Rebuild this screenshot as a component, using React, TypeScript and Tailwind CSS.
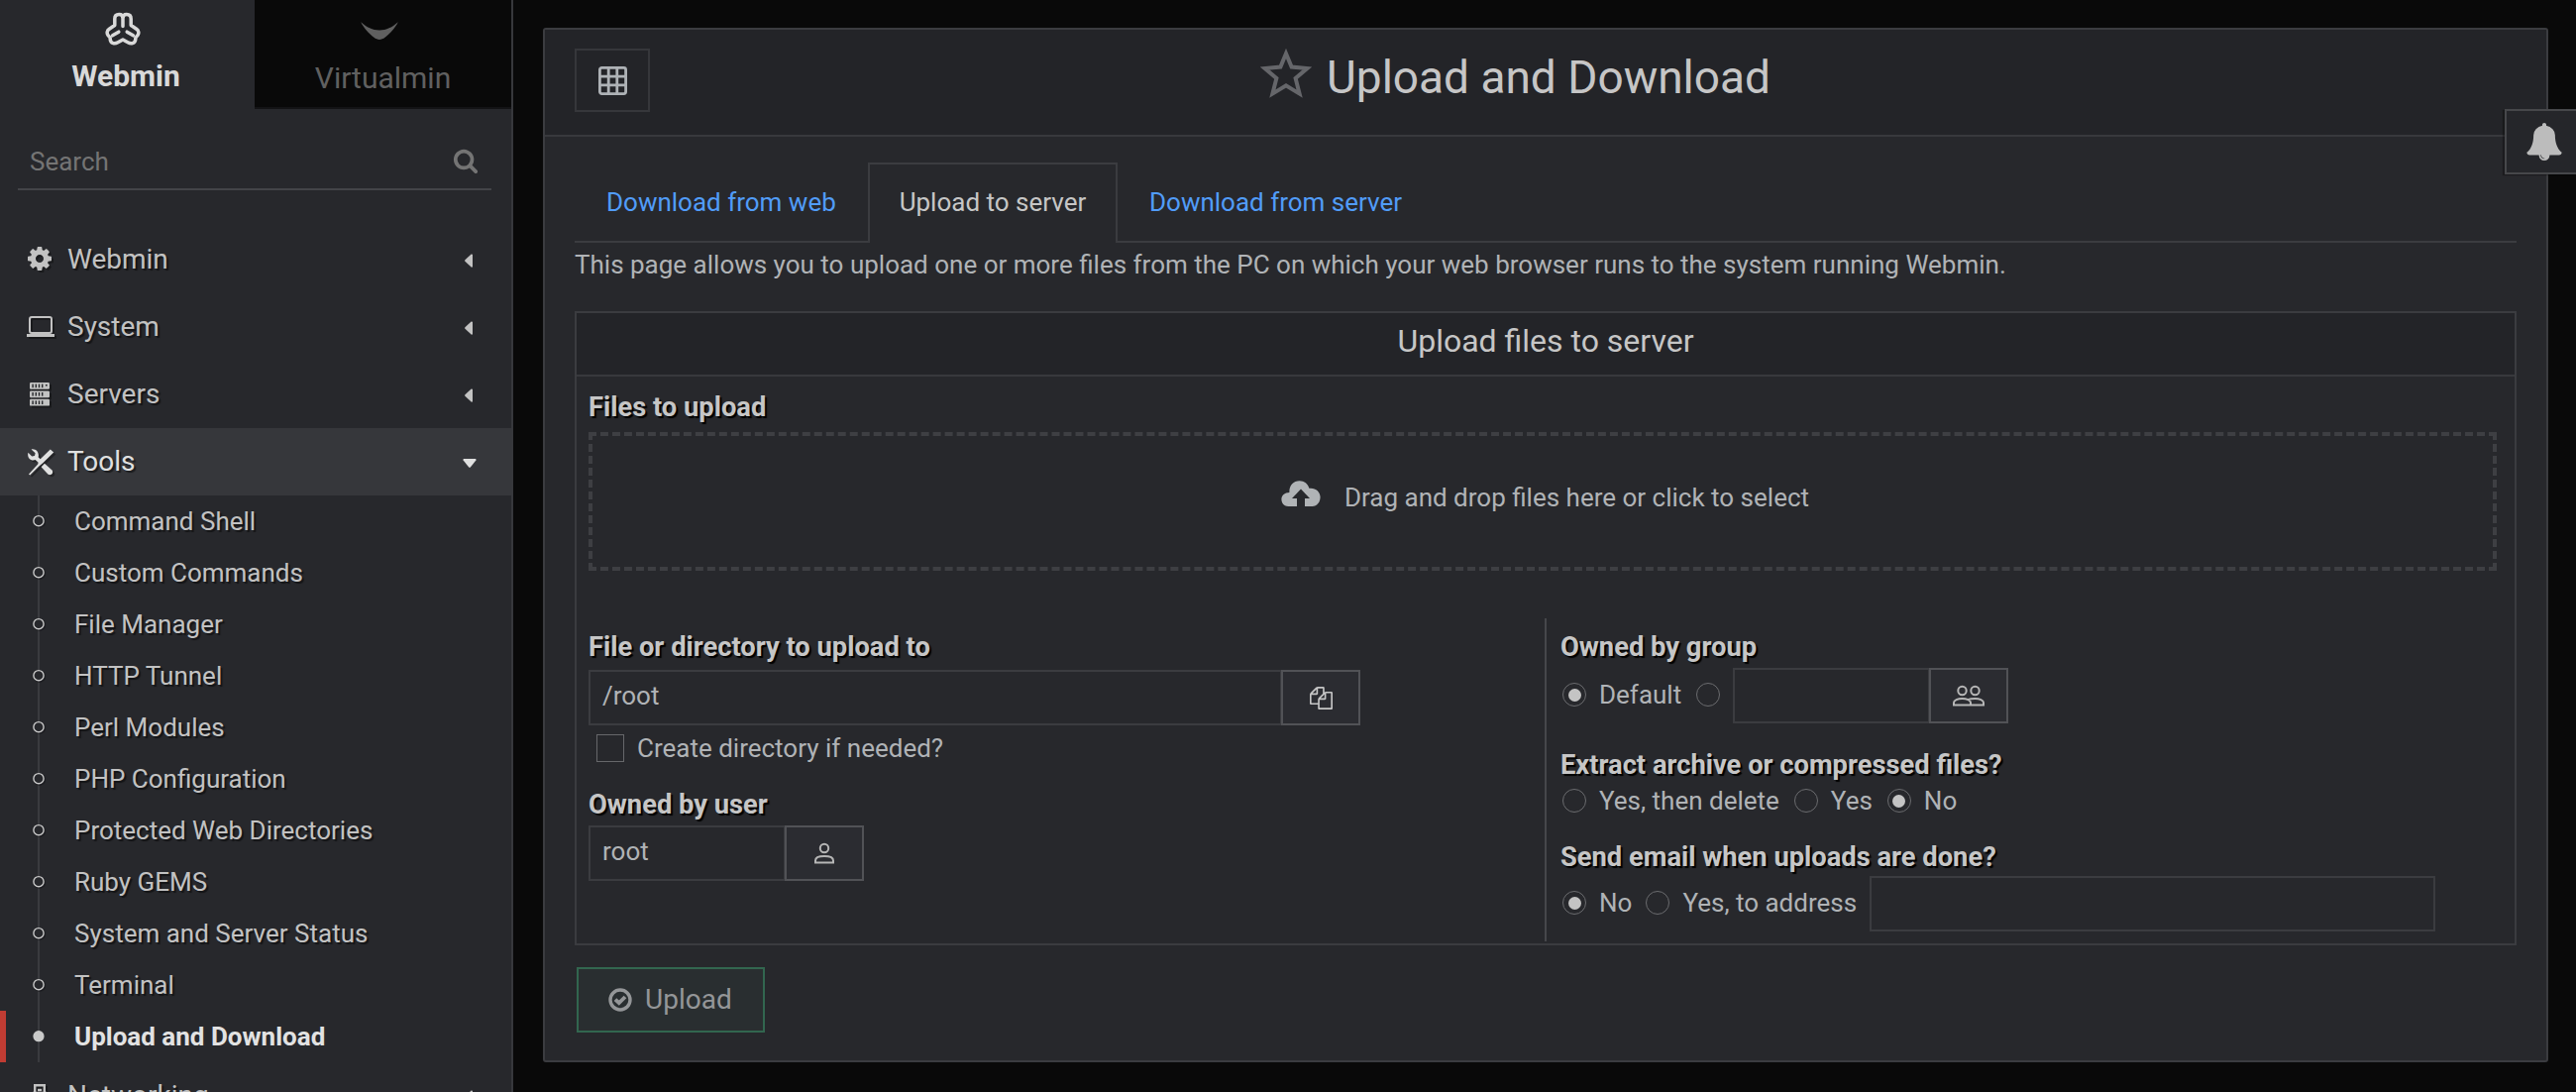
import React from "react";

const PATHS = {
  cog: "M1152 896q0-106-75-181t-181-75-181 75-75 181 75 181 181 75 181-75 75-181zm512-109v222q0 12-8 23t-20 13l-185 28q-19 54-39 91 35 50 107 138 10 12 10 25t-9 23q-27 37-99 108t-94 71q-12 0-26-9l-138-108q-44 23-91 38-16 136-29 186-7 28-36 28h-222q-14 0-24.5-8.5t-11.5-21.5l-28-184q-49-16-90-37l-141 107q-10 9-25 9-14 0-25-11-126-114-165-168-7-10-7-23 0-12 8-23 15-21 51-66.5t54-70.5q-27-50-41-99l-183-27q-13-2-21-12.5t-8-23.5v-222q0-12 8-23t19-13l186-28q14-46 39-92-40-57-107-138-10-12-10-24 0-10 9-23 26-36 98.5-107.5t94.5-71.5q13 0 26 10l138 107q44-23 91-38 16-136 29-186 7-28 36-28h222q14 0 24.5 8.5t11.5 21.5l28 184q49 16 90 37l142-107q9-9 24-9 13 0 25 10 129 119 165 170 7 8 7 22 0 12-8 23-15 21-51 66.5t-54 70.5q26 50 41 98l183 28q13 2 21 12.5t8 23.5z",
  search:
    "M1216 832q0-185-131.5-316.5t-316.5-131.5-316.5 131.5-131.5 316.5 131.5 316.5 316.5 131.5 316.5-131.5 131.5-316.5zm512 832q0 52-38 90t-90 38q-54 0-90-38l-343-342q-179 124-399 124-143 0-273.5-55.5t-225-150-150-225-55.5-273.5 55.5-273.5 150-225 225-150 273.5-55.5 273.5 55.5 225 150 150 225 55.5 273.5q0 220-124 399l343 343q37 37 37 90z",
  bell: "M912 1696q0-16-16-16-59 0-101.5-42.5t-42.5-101.5q0-16-16-16t-16 16q0 73 51.5 124.5t124.5 51.5q16 0 16-16zm816-288q0 52-38 90t-90 38h-448q0 106-75 181t-181 75-181-75-75-181h-448q-52 0-90-38t-38-90q50-42 91-88t85-119.5 74.5-158.5 50-206 19.5-260q0-152 117-282.5t307-158.5q-8-19-8-39 0-40 28-68t68-28 68 28 28 68q0 20-8 39 190 28 307 158.5t117 282.5q0 139 19.5 260t50 206 74.5 158.5 85 119.5 91 88z",
  files:
    "M1696 384q40 0 68 28t28 68v1216q0 40-28 68t-68 28h-960q-40 0-68-28t-28-68v-288h-544q-40 0-68-28t-28-68v-672q0-40 20-88t48-76l408-408q28-28 76-48t88-20h416q40 0 68 28t28 68v328q68-40 128-40h416zm-544 213l-299 299h299v-299zm-640-384l-299 299h299v-299zm196 647l316-316v-416h-384v416q0 40-28 68t-68 28h-416v640h512v-256q0-40 20-88t48-76zm956 804v-1152h-384v416q0 40-28 68t-68 28h-416v640h896z",
};

function Glyph({ d, className }: { d: string; className: string }) {
  return (
    <svg viewBox="0 0 1792 1792" className={className} fill="currentColor">
      <path d={d} />
    </svg>
  );
}

function WebminLogo() {
  return (
    <svg viewBox="0 0 36 34" className="h-[34px] w-9" fill="none" stroke="currentColor" strokeWidth="3.5" strokeLinecap="round" strokeLinejoin="round">
      <path d="M18 14.5V6.5C18 3.8 16.6 2.6 14.2 2.6C11.4 2.6 9.8 4.4 9.8 7V13.5L4.3 17.2C1.9 18.8 1.6 21.6 3 23.6C4 25 4.9 25.2 5.2 26.2C5 29 6 31 8.2 31.6C10.2 32.2 11.6 31.6 13 30.8L18 28L23 30.8C24.4 31.6 25.8 32.2 27.8 31.6C30 31 31 29 30.8 26.2C31.1 25.2 32 25 33 23.6C34.4 21.6 34.1 18.8 31.7 17.2L26.2 13.5V7C26.2 4.4 24.6 2.6 21.8 2.6C19.4 2.6 18 3.8 18 6.5" />
      <path d="M13.8 20.2L7.6 23.8M22.2 20.2L28.4 23.8" />
    </svg>
  );
}

function LaptopIcon() {
  return (
    <svg viewBox="0 0 28 22" className="h-[22px] w-7">
      <rect x="3" y="1" width="22" height="16" rx="2" fill="none" stroke="currentColor" strokeWidth="2" />
      <rect x="0" y="18" width="28" height="3" fill="currentColor" />
    </svg>
  );
}

function ServersIcon() {
  return (
    <svg viewBox="0 0 20 24" className="h-6 w-5">
      {[0, 8.4, 16.8].map((y) => (
        <g key={y}>
          <rect x="0" y={y} width="20" height="6.8" rx="1.2" fill="currentColor" />
          {[2.4, 5.6, 8.8, 12].map((x) => (
            <rect key={x} x={x} y={y + 1.6} width="1.4" height="3.6" fill="#27282c" />
          ))}
        </g>
      ))}
      <rect x="16" y="2" width="1.6" height="1.6" fill="#27282c" />
    </svg>
  );
}

function ToolsIcon() {
  return (
    <svg viewBox="0 0 27 27" className="h-[27px] w-[27px]" fill="currentColor">
      <path d="M3.6 0.4L7.6 4.2L7 7L4.2 7.4L0.4 3.8C-.6 7.6 1.6 11.4 5.4 11.4C6.4 11.4 7.2 11.2 7.6 11L11 14L13.8 11.4L10.6 8.2C12 4.2 8.6-0.6 3.6 0.4Z" />
      <path d="M22.8 0.4L26.2 3.6L15 14.6L11.6 17.2L2.2 26.6L1 25.4L10.2 15.6L11.2 11.8Z" />
      <path d="M17 14.8L24.6 21.6C26.4 24 23.2 27.6 20.6 25.8L13.6 18.2Z" />
    </svg>
  );
}

function NetworkIcon() {
  return (
    <svg viewBox="0 0 14 24" className="h-6 w-[14px]" fill="none" stroke="currentColor" strokeWidth="2.4">
      <path d="M2.2 9V1.2H11.8V9M1.2 9H12.8V17H1.2ZM7 17V24" />
      <path d="M5 6H9" />
    </svg>
  );
}

function CloudUpload() {
  return (
    <svg viewBox="0 0 40 26" className="h-[26px] w-10" fill="currentColor">
      <path
        fillRule="evenodd"
        d="M7.4 26C3.2 26 0.4 22.8 0.4 19C0.4 15.2 3.6 12 8.4 12C8 5 12.4 0.2 18.6 0.2C23.4 0.2 27.2 3.2 28.4 7.8C34.6 7 39.6 11 39.6 16.8C39.6 22 36 26 31.4 26H24V18H29L20 8.4L11 18H16V26Z"
      />
    </svg>
  );
}

function Person({ two = false }: { two?: boolean }) {
  return (
    <svg viewBox={two ? "0 0 32 22" : "0 0 20 22"} className={two ? "h-[22px] w-8" : "h-[22px] w-5"} fill="none" stroke="currentColor" strokeWidth="2">
      {two ? (
        <>
          <circle cx="9.5" cy="6" r="4.2" />
          <circle cx="22.5" cy="6" r="4.2" />
          <path d="M1 20.4V18C1 15.6 5 14 9.5 14C14 14 18 15.6 18 18V20.4ZM15 15.2C17 14.4 19.6 14 22.5 14C27 14 31 15.6 31 18V20.4H18" />
        </>
      ) : (
        <>
          <circle cx="10" cy="6" r="4.2" />
          <path d="M1 20.4V18.4C1 15.6 5 14 10 14C15 14 19 15.6 19 18.4V20.4Z" />
        </>
      )}
    </svg>
  );
}

function MenuRow({ icon, label, open = false }: { icon: React.ReactNode; label: string; open?: boolean }) {
  return (
    <div
      className={
        open
          ? "flex h-[68px] shrink-0 items-center bg-[#36373b] pl-[27px] pr-[35px] text-[#e0e0e0]"
          : "flex h-[68px] shrink-0 items-center pl-[27px] pr-[39px] text-[#c2c2c2]"
      }
    >
      <span className="flex w-[41px] drop-shadow-[2px_2px_0_rgba(0,0,0,0.35)]">{icon}</span>
      <span className="flex-1 text-[28px] leading-[68px] [text-shadow:2px_2px_1px_rgba(0,0,0,0.5)]">{label}</span>
      {open ? (
        <svg viewBox="0 0 14 9" className="mt-0.5 h-[9px] w-[14px]" fill="currentColor">
          <path d="M1 0H13Q14 .6 13.4 1.4L7.8 8.4Q7 9 6.2 8.4L.6 1.4Q0 .6 1 0Z" />
        </svg>
      ) : (
        <svg viewBox="0 0 8 14" className="mt-0.5 h-[14px] w-2" fill="currentColor">
          <path d="M8 1V13Q7.6 14 6.6 13.4L.4 7.8Q-.2 7 .4 6.2L6.6 .6Q7.6 0 8 1Z" />
        </svg>
      )}
    </div>
  );
}

const SUB = [
  "Command Shell",
  "Custom Commands",
  "File Manager",
  "HTTP Tunnel",
  "Perl Modules",
  "PHP Configuration",
  "Protected Web Directories",
  "Ruby GEMS",
  "System and Server Status",
  "Terminal",
  "Upload and Download",
];

function SubItem({ label, active }: { label: string; active: boolean }) {
  return (
    <div className={active ? "flex h-[52px] items-stretch border-l-[6px] border-[#c03c33] text-[#e2e2e2]" : "flex h-[52px] items-stretch border-l-[6px] border-transparent text-[#c2c2c2]"}>
      <span className="flex w-[69px] pl-[27px]">
        <svg viewBox="0 0 13 52" className="h-[52px] w-[13px]">
          <path d="M6 0V52" stroke="#3a3b3f" strokeWidth="2" />
          {active ? (
            <circle cx="6" cy="25.7" r="5.6" fill="#c9c9c9" />
          ) : (
            <>
              <circle cx="7" cy="26.7" r="5.4" fill="none" stroke="#15161a" strokeOpacity="0.6" strokeWidth="1.6" />
              <circle cx="6" cy="25.7" r="5.1" fill="#27282c" stroke="#c9c9c9" strokeWidth="1.4" />
            </>
          )}
        </svg>
      </span>
      <span
        className={
          active
            ? "text-[26px] font-bold leading-[52px]"
            : "text-[26px] leading-[52px] [text-shadow:2px_2px_1px_rgba(0,0,0,0.5)]"
        }
      >
        {label}
      </span>
    </div>
  );
}

function Sidebar() {
  return (
    <aside className="flex h-[1102px] w-[518px] shrink-0 flex-col overflow-hidden border-r-2 border-[#37383c] bg-[#27282c]">
      <div className="flex h-[110px] shrink-0">
        <div className="flex w-[257px] flex-col items-center pr-2.5 pt-3 text-[#d9d9d9]">
          <WebminLogo />
          <span className="mt-[13px] pl-[7px] text-[30px] font-bold leading-9">Webmin</span>
        </div>
        <div className="flex flex-1 flex-col items-center border-b-2 border-[#131315] bg-[#090909] pt-[22px] text-[#606060]">
          <svg viewBox="0 0 38 18" className="mr-2 h-[18px] w-[38px]" fill="currentColor">
            <path d="M0.2 0.2C6 5.4 12 8.4 19 8.4C26 8.4 32 5.4 37.8 0.2C35 6 29.5 12 24.6 15.8C21 18.6 17 18.6 13.4 15.8C8.5 12 3 6 0.2 0.2Z" />
          </svg>
          <span className="mt-[21px] text-[30px] leading-9">Virtualmin</span>
        </div>
      </div>
      <div className="mx-[18px] mr-5 mt-[26px] flex h-14 shrink-0 items-center justify-between border-b-2 border-[#434448] pl-3 pr-[13px] text-[#747474]">
        <span className="text-[26px]">Search</span>
        <Glyph d={PATHS.search} className="-mt-0.5 h-[26px] w-[26px]" />
      </div>
      <nav className="mt-9 flex flex-col">
        <MenuRow icon={<Glyph d={PATHS.cog} className="-ml-px -mt-0.5 h-7 w-7" />} label="Webmin" />
        <MenuRow icon={<LaptopIcon />} label="System" />
        <MenuRow icon={<span className="flex pl-[3px]"><ServersIcon /></span>} label="Servers" />
        <MenuRow icon={<span className="flex pl-px"><ToolsIcon /></span>} label="Tools" open />
        {SUB.map((s, i) => (
          <SubItem key={s} label={s} active={i === SUB.length - 1} />
        ))}
        <MenuRow icon={<span className="flex pl-1.5"><NetworkIcon /></span>} label="Networking" />
      </nav>
    </aside>
  );
}

function Radio({ on = false }: { on?: boolean }) {
  return (
    <span className="flex h-6 w-6 shrink-0 items-center justify-center rounded-full border border-[#6b6c6f]">
      {on && <span className="h-[13px] w-[13px] rounded-full bg-[#c4c4c4]" />}
    </span>
  );
}

function Label({ children }: { children: React.ReactNode }) {
  return <div className="text-[27.3px] font-bold leading-8 text-[#c6c6c6] [text-shadow:2px_2px_1px_#000]">{children}</div>;
}

function PickerButton({ children }: { children: React.ReactNode }) {
  return (
    <button className="-ml-px flex h-14 w-20 items-center justify-center border-2 border-[#515256] bg-[#2b2c31] text-[#b6b6b6]">
      {children}
    </button>
  );
}

function Content() {
  return (
    <main className="ml-[30px] mt-7 flex h-[1044px] w-[2024px] flex-col rounded-[3px] border-2 border-[#3b3c40] bg-[#27282c]">
      <header className="flex h-[108px] shrink-0 items-start border-b-2 border-[#38393d] bg-[#232428] pl-[30px] pr-[167px] pt-[19px]">
        <button className="flex h-16 w-[76px] items-center justify-center border-2 border-[#36373b] text-[#aeb2b6]">
          <svg viewBox="0 0 29 29" className="h-[29px] w-[29px]" fill="none" stroke="currentColor" strokeWidth="2.8">
            <rect x="1.4" y="1.4" width="26.2" height="26.2" rx="2" />
            <path d="M10.2 1.4V27.6M18.8 1.4V27.6M1.4 10.2H27.6M1.4 18.8H27.6" />
          </svg>
        </button>
        <h1 className="flex flex-1 items-start justify-center gap-[15px] text-[#c6c6c6]">
          <svg viewBox="0 0 52 50" className="h-[50px] w-[52px]" fill="none" stroke="#65666a" strokeWidth="4">
            <path d="M26 5L31.6 18.6L47.4 20L35.6 30L39.6 45.6L26 37.4L12.4 45.6L16.4 30L4.6 20L20.4 18.6Z" />
          </svg>
          <span className="text-[46px] leading-[58px]">Upload and Download</span>
        </h1>
      </header>

      <div className="flex flex-col pl-[30px] pr-[30px] pt-[26px] text-[26px] text-[#b0b3b6]">
        <div className="flex h-[81px] items-stretch leading-[80px]">
          <span className="w-[296px] border-b-2 border-[#3b3c40] pl-8 text-[#519cf8]">Download from web</span>
          <span className="w-[252px] border-2 border-b-0 border-[#3b3c40] text-center leading-[76px] text-[#c6c6c6]">Upload to server</span>
          <span className="flex-1 border-b-2 border-[#3b3c40] pl-8 text-[#519cf8]">Download from server</span>
        </div>
        <p className="mt-[7px] h-[62px] leading-[30px]">
          This page allows you to upload one or more files from the PC on which your web browser runs to the system running Webmin.
        </p>

        <section className="h-[640px] border-2 border-[#3b3c40]">
          <h2 className="h-[64px] border-b-2 border-[#38393d] bg-[#232428] text-center text-[32px] leading-[57px] text-[#c6c6c6]">
            Upload files to server
          </h2>
          <div className="pl-3 pr-[18px] pt-[15px]">
            <Label>Files to upload</Label>
            <div className="mt-[9px] flex h-[140px] items-center justify-center gap-[24px] border-4 border-dashed border-[#3e3f43] pl-[5px]">
              <span className="-mt-4"><CloudUpload /></span>
              <span className="-mt-2">Drag and drop files here or click to select</span>
            </div>
          </div>

          <div className="mt-12 flex h-[326px]">
            <div className="w-[977px] pl-3 pt-[13px]">
              <Label>File or directory to upload to</Label>
              <div className="mt-[7px] flex">
                <div className="h-14 w-[700px] border-2 border-[#3b3c40] pl-3 leading-[48px]">/root</div>
                <PickerButton>
                  <Glyph d={PATHS.files} className="h-[23px] w-[23px] text-[#c6c6c6]" />
                </PickerButton>
              </div>
              <div className="ml-2 mt-[9px] flex h-7 items-center gap-[13px]">
                <span className="h-7 w-7 border border-[#66676a]" />
                <span>Create directory if needed?</span>
              </div>
              <div className="mt-[27px]">
                <Label>Owned by user</Label>
              </div>
              <div className="mt-[5px] flex">
                <div className="h-14 w-[199px] border-2 border-[#3b3c40] pl-3 leading-[48px]">root</div>
                <PickerButton>
                  <Person />
                </PickerButton>
              </div>
            </div>

            <div className="flex-1 border-l-2 border-[#46474b] pl-3.5 pt-[13px]">
              <Label>Owned by group</Label>
              <div className="ml-0.5 mt-[5px] flex h-14">
                <div className="flex h-[54px] items-center">
                  <Radio on />
                  <span className="ml-[13px] mr-[15px]">Default</span>
                  <Radio />
                </div>
                <div className="ml-[13px] h-14 w-[199px] border-2 border-[#3b3c40]" />
                <PickerButton>
                  <Person two />
                </PickerButton>
              </div>
              <div className="mt-[26px]">
                <Label>Extract archive or compressed files?</Label>
              </div>
              <div className="ml-0.5 mt-2 flex h-6 items-center">
                <Radio />
                <span className="ml-[13px] mr-[15px]">Yes, then delete</span>
                <Radio />
                <span className="ml-[13px] mr-[15px]">Yes</span>
                <Radio on />
                <span className="ml-[13px]">No</span>
              </div>
              <div className="mt-[29px]">
                <Label>Send email when uploads are done?</Label>
              </div>
              <div className="ml-0.5 mt-[3px] flex h-14">
                <div className="flex h-[54px] items-center">
                  <Radio on />
                  <span className="ml-[13px] mr-[14px]">No</span>
                  <Radio />
                  <span className="ml-[13px] mr-[13px]">Yes, to address</span>
                </div>
                <div className="h-14 w-[571px] border-2 border-[#3b3c40]" />
              </div>
            </div>
          </div>
        </section>

        <button className="ml-0.5 mt-[22px] flex h-[66px] w-[190px] items-center gap-[13px] border-2 border-[#32664f] bg-[#292e30] pl-[30px] text-[28px] text-[#949698]">
          <svg viewBox="0 0 24 24" className="h-6 w-6" fill="none" stroke="currentColor">
            <circle cx="12" cy="12" r="10" strokeWidth="3.4" />
            <path d="M7 11.6L10.8 15.2L17 9" strokeWidth="3.8" />
          </svg>
          <span>Upload</span>
        </button>
      </div>
    </main>
  );
}

export default function App() {
  return (
    <div className="relative flex h-[1102px] w-[2600px] overflow-hidden bg-[#090909] font-['Roboto',sans-serif]">
      <Sidebar />
      <Content />
      <button className="absolute right-0 top-[110px] flex h-[66px] w-[72px] items-center border-2 border-r-0 border-[#46474a] bg-[#25262a] pl-[19px] text-[#bcbcbc] shadow-[-2px_1px_1px_rgba(0,0,0,0.3)]">
        <Glyph d={PATHS.bell} className="h-[38px] w-[38px]" />
      </button>
    </div>
  );
}
